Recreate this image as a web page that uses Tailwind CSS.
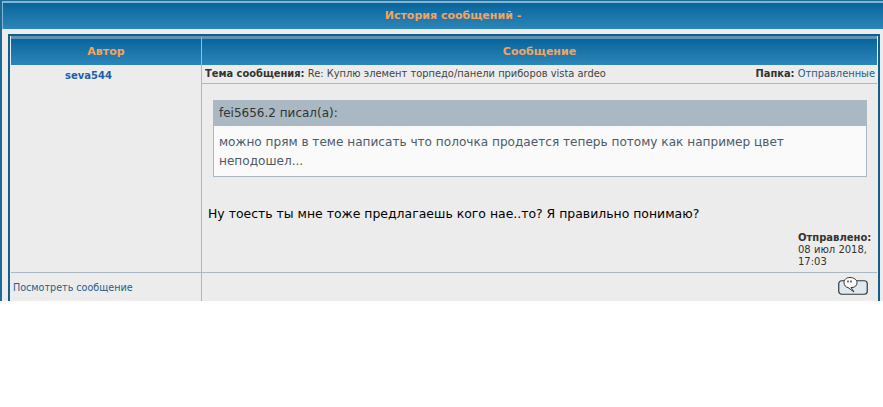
<!DOCTYPE html>
<html><head><script src="https://cdn.jsdelivr.net/npm/@tailwindcss/browser@4"></script></head>
<body class="bg-white font-['DejaVu_Sans',sans-serif]">
<div class="h-[301px] w-[883px] overflow-hidden bg-[#ececec] border-l-2 border-[#1b6a97]">
  <div class="h-[29px] pt-px bg-[#1b6a97]"><div class="h-[28px] border-t-2 border-l border-[#82b5d3] bg-gradient-to-b from-[#05659c] to-[#2c86b9] flex items-center justify-center pl-[20px] pt-[1px] text-[11px] font-bold text-[#f3a45f]">История сообщений -</div></div>
  <div class="ml-[6px] w-[872px] mt-[5px] h-[300px] border-[2px] border-[#125f8d] bg-[#e8eef2] pl-px pr-px">
    <div class="h-full bg-[#ececec] grid grid-cols-[191px_1fr] grid-rows-[29px_1fr]">
      <div class="border-r border-[#a9b8c2] border-t-[3px] border-t-[#5f93b3] bg-gradient-to-b from-[#05659c] to-[#2c86b9] flex items-center justify-center text-[11px] font-bold text-[#f3a45f]">Автор</div>
      <div class="border-t-[3px] border-t-[#5f93b3] bg-gradient-to-b from-[#05659c] to-[#2c86b9] flex items-center justify-center text-[11px] font-bold text-[#f3a45f]">Сообщение</div>
      <div class="border-r border-[#a9b8c2] flex flex-col">
        <div class="h-[207px] pt-[3px] pl-[54px] text-[10px] font-bold text-[#1d5ea8]">seva544</div>
        <div class="border-t border-[#a9b8c2] pt-[8px] pl-[2px] text-[9.6px] text-[#1f5e88]">Посмотреть сообщение</div>
      </div>
      <div class="flex flex-col">
        <div class="h-[19px] border-b border-[#a9b8c2] flex justify-between items-center pl-[3px] pr-[2px] text-[9.9px] text-[#333]">
          <div><b>Тема сообщения:</b> <span class="text-[#444]">Re: Куплю элемент торпедо/панели приборов vista ardeo</span></div>
          <div><b>Папка:</b> <span class="text-[#1f5e88]">Отправленные</span></div>
        </div>
        <div class="h-[188px] relative pl-[11px] pr-[10px] pt-[16px]">
          <div class="border border-[#a9b8c2] bg-[#fafafa]">
            <div class="h-[26px] -m-px mb-0 bg-[#a9b8c2] flex items-center px-[6px] text-[12px] text-[#333]">fei5656.2 писал(а):</div>
            <div class="px-[5px] pt-[7px] pb-[5px] text-[12.1px] leading-[19px] text-[#4d5a68]">можно прям в теме написать что полочка продается теперь потому как например цвет<br>неподошел...</div>
          </div>
          <div class="mt-[28px] -ml-[5px] text-[12.45px] text-black">Ну тоесть ты мне тоже предлагаешь кого нае..то? Я правильно понимаю?</div>
          <div class="absolute right-[4px] top-[148px] w-[75px] text-[10px] leading-[12px] text-[#333]"><b>Отправлено:</b><br>08 июл 2018, 17:03</div>
        </div>
        <div class="border-t border-[#a9b8c2] flex justify-end pr-[9px] pt-[4px]">
          <svg width="30" height="18" viewBox="0 0 30 18"><rect x=".75" y="3.750" width="28.500" height="13.500" rx="3" fill="#dfe9ef" stroke="#2c3a42" stroke-width="1.200"/><path d="M6 5.500c0-3 2.500-5 6-5s7 2 7 5-2 5-5 5h-1l3 4.500-6-4.500C8 10.500 6 8.500 6 5.500z" fill="#fff" stroke="#333"/><path d="M10 3.500v2M13 3.500v2" stroke="#333" stroke-width="1.300"/></svg>
        </div>
      </div>
    </div>
  </div>
</div>
</body></html>
